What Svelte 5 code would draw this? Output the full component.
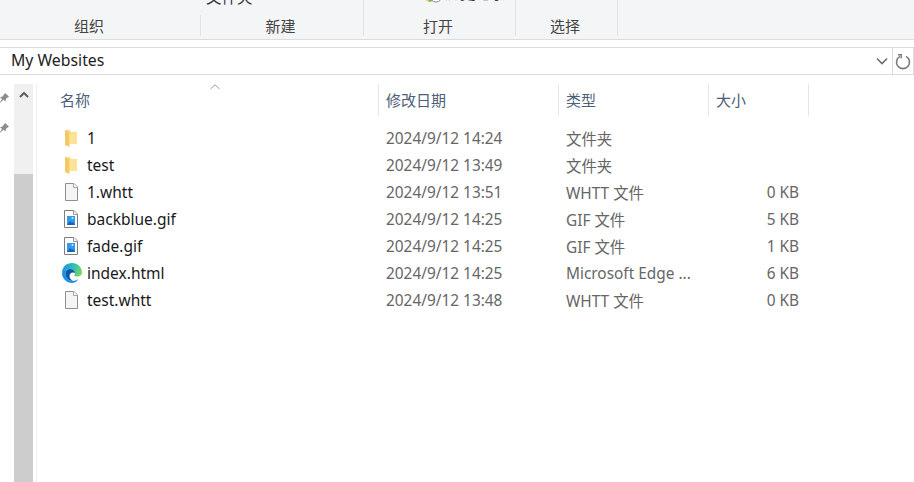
<script>
  const files = [
    { name: '1', date: '2024/9/12 14:24', type: '文件夹', size: '', icon: 'folder' },
    { name: 'test', date: '2024/9/12 13:49', type: '文件夹', size: '', icon: 'folder' },
    { name: '1.whtt', date: '2024/9/12 13:51', type: 'WHTT 文件', size: '0 KB', icon: 'doc' },
    { name: 'backblue.gif', date: '2024/9/12 14:25', type: 'GIF 文件', size: '5 KB', icon: 'gif' },
    { name: 'fade.gif', date: '2024/9/12 14:25', type: 'GIF 文件', size: '1 KB', icon: 'gif' },
    { name: 'index.html', date: '2024/9/12 14:25', type: 'Microsoft Edge ...', size: '6 KB', icon: 'edge' },
    { name: 'test.whtt', date: '2024/9/12 13:48', type: 'WHTT 文件', size: '0 KB', icon: 'doc' }
  ];
  const pins = [0, 1];
</script>

<div class="window">
  <div class="ribbon">
    <div class="group first"><span class="label">组织</span></div>
    <div class="group new">
      <span class="clipped">文件夹</span>
      <span class="label">新建</span>
    </div>
    <div class="group open">
      <span class="history">
        <svg width="18" height="12" viewBox="0 0 18 12">
          <path d="M0 2l4-2 3 2-3 2z" fill="#f3d27a" />
          <path d="M3 1l4-1 1 3-4 1z" fill="#6fb84a" />
          <circle cx="11" cy="-2" r="6" fill="#fff" stroke="#8a8a8a" />
        </svg>
        <span class="clipped">历史记录</span>
      </span>
      <span class="label">打开</span>
    </div>
    <div class="group select"><span class="label">选择</span></div>
  </div>

  <div class="address">
    <span class="path">My Websites</span>
    <svg class="chevron" width="12" height="8" viewBox="0 0 12 8">
      <path d="M1 1.500l5 5 5-5" fill="none" stroke="#6d6d6d" stroke-width="1.6" />
    </svg>
    <div class="refresh">
      <svg width="16" height="17" viewBox="0 0 16 17">
        <path d="M5 3.400A6.500 6.500 0 1 0 11 3.400" fill="none" stroke="#7a7a7a" stroke-width="1.600" />
        <path d="M3 1.800H6.200V5.500" fill="none" stroke="#7a7a7a" stroke-width="1.400" />
      </svg>
    </div>
  </div>

  <div class="main">
    <div class="nav">
      <div class="pins">
        {#each pins as pin}
          <svg width="10" height="12" viewBox="0 0 10 12">
            <path d="M0 11.500L3 7 .8 5.200 3.500 4.600 6 1l4 3.600-3 2.200-.6 2.800L4.500 7.800z" fill="#8c8c8c" />
          </svg>
        {/each}
      </div>
      <div class="scrollbar">
        <div class="arrow">
          <svg width="10" height="7" viewBox="0 0 10 7">
            <path d="M1 6l4-4 4 4" fill="none" stroke="#555" stroke-width="1.800" />
          </svg>
        </div>
        <div class="thumb"></div>
      </div>
    </div>

    <div class="list">
      <svg class="sort" width="10" height="6" viewBox="0 0 10 6">
        <path d="M.5 5L5 .8 9.500 5" fill="none" stroke="#9a9a9a" />
      </svg>
      <div class="head">
        <div class="col name">名称</div>
        <div class="col date">修改日期</div>
        <div class="col type">类型</div>
        <div class="col size">大小</div>
      </div>
      <div class="rows">
        {#each files as f}
          <div class="row">
            <div class="cell file">
              <span class="icon">
                {#if f.icon === 'folder'}
                  <svg width="18" height="18" viewBox="0 0 18 18">
                    <path d="M2 1h5l1 2h6v12H2z" fill="#fcdc85" />
                    <path d="M2 1l4.500 2.500V18L2 16z" fill="#f2c964" />
                    <path d="M6.500 3.500H14V15H6.500z" fill="#fde398" />
                  </svg>
                {:else if f.icon === 'doc'}
                  <svg width="18" height="18" viewBox="0 0 18 18">
                    <path d="M2.500.5h8.500l3.500 3.500v13.500h-12z" fill="#f4f5f6" stroke="#8f8f8f" />
                    <path d="M10.500.5v4h4" fill="#fff" stroke="#a5a5a5" />
                  </svg>
                {:else if f.icon === 'gif'}
                  <svg width="18" height="18" viewBox="0 0 18 18">
                    <path d="M1.500.5h9.500l3.500 3.500v13.500h-13z" fill="#fff" stroke="#7d7d7d" />
                    <path d="M10.500.5v4h4" fill="#f3f3f3" stroke="#9a9a9a" />
                    <rect x="4" y="6" width="8" height="9" fill="#2f9bea" />
                    <path d="M4 15l3-4 2 2 1-1 2 3z" fill="#1a5fc0" />
                    <circle cx="9.500" cy="8" r="1" fill="#cfeaff" />
                  </svg>
                {:else}
                  <svg class="edge" width="20" height="20" viewBox="0 0 20 20">
                    <defs>
                      <linearGradient id="edgeTop" x1="0" y1="0.300" x2="1" y2="0.500">
                        <stop offset="0" stop-color="#1b8fdf" />
                        <stop offset="0.55" stop-color="#2fbfb8" />
                        <stop offset="1" stop-color="#78d85c" />
                      </linearGradient>
                    </defs>
                    <path d="M0 10C0 4 4.500 0 10 0c5.500 0 10 4 10 9.500 0 2.500-2 4-4.500 4-1.500 0-3-.5-3.500-1 .5-.5 1-1 1-2C13 7.500 10 6 7.500 6 4 6 1 8 0 10z" fill="url(#edgeTop)" />
                    <path d="M0 10c1.500-3 4-4 7-4-3 1-4 3.500-3.500 6 .5 3 3.500 6 7 6 2.500 0 4.500-.8 6-2-1.500 2.500-4 4-6.500 4C4.500 20 0 15.500 0 10z" fill="#1b8fe2" />
                    <path d="M7.500 6c-3 .5-4.500 3.500-4 6 .5 3 3.500 6 7.500 6-2-1-3.500-3-3.500-5 0-3 3-4.500 5.500-3C13 7.500 10 6 7.500 6z" fill="#0b58ab" />
                  </svg>
                {/if}
              </span>
              <span>{f.name}</span>
            </div>
            <div class="cell">{f.date}</div>
            <div class="cell">{f.type}</div>
            <div class="cell right">{f.size}</div>
          </div>
        {/each}
      </div>
    </div>
  </div>
</div>

<style>
  :global(body) {
    margin: 0;
    background: #fff;
    overflow: hidden;
  }
  .window {
    width: 914px;
    height: 482px;
    overflow: hidden;
    display: flex;
    flex-direction: column;
    font-family: "Noto Sans", "Noto Sans CJK SC", sans-serif;
    font-size: 15px;
    color: #1a1a1a;
    background: #fff;
  }

  /* ribbon, the button rows are cut off by the top of the shot */
  .ribbon {
    flex: none;
    display: flex;
    background: #f4f5f7;
    border-bottom: 1px solid #dcdcdc;
    padding-bottom: 3px;
    height: 36px;
    overflow: hidden;
    margin-left: -22px;
    width: 936px;
  }
  .group {
    box-sizing: border-box;
    height: 100%;
    border-right: 1px solid #e2e3e5;
    display: flex;
    flex-direction: column;
    align-items: center;
    justify-content: flex-end;
    position: relative;
  }
  .first { width: 223px; height: 21px; align-self: flex-end; }
  .new { width: 163px; padding-right: 3px; }
  .open { width: 152px; padding-right: 3px; }
  .select { width: 102px; padding-right: 3px; }
  .label {
    font-size: 15px;
    line-height: 20px;
    color: #444;
  }
  .clipped {
    position: absolute;
    top: -13px;
    font-size: 15.500px;
    line-height: 20px;
    white-space: nowrap;
    color: #333;
  }
  .new .clipped { left: 5px; }
  .history {
    position: absolute;
    top: -2px;
    left: 61px;
    display: flex;
  }
  .history .clipped { left: 20px; top: -15px; letter-spacing: -.5px; }

  .address {
    margin-top: 7px;
    height: 26px;
    flex: none;
    display: flex;
    align-items: center;
    border-top: 1px solid #dcdcdc;
    border-bottom: 1px solid #dcdcdc;
  }
  .path {
    flex: 1;
    padding-left: 11px;
    padding-bottom: 2px;
    font-size: 15.800px;
    color: #222;
  }
  .chevron { margin-right: 4px; }
  .refresh {
    width: 22px;
    height: 100%;
    border-left: 1px solid #dcdcdc;
    border-right: 1px solid #dcdcdc;
    box-sizing: border-box;
    display: flex;
    align-items: center;
    justify-content: center;
  }

  .main {
    flex: 1;
    display: flex;
    min-height: 0;
    padding-top: 9px;
  }
  .nav {
    width: 37px;
    flex: none;
    box-sizing: border-box;
    border-right: 1px solid #f0f0f0;
    display: flex;
    padding-right: 3px;
  }
  .pins {
    width: 14px;
    flex: none;
    display: flex;
    flex-direction: column;
    gap: 18px;
    padding-top: 8px;
  }
  .pins svg { margin-left: -1px; }
  .scrollbar {
    width: 20px;
    background: #f0f0f0;
    display: flex;
    flex-direction: column;
  }
  .arrow {
    height: 90px;
    flex: none;
    display: flex;
    justify-content: center;
    padding-top: 7px;
    box-sizing: border-box;
  }
  .thumb {
    flex: 1;
    background: #cdcdcd;
  }

  .list {
    flex: 1;
    position: relative;
  }
  .sort {
    position: absolute;
    left: 173px;
    top: 0;
  }
  .head {
    display: flex;
    height: 32px;
    color: #4c607a;
    font-size: 15px;
  }
  .col {
    box-sizing: border-box;
    border-right: 1px solid #e5e5e5;
    display: flex;
    align-items: center;
    padding: 0 0 1px 7px;
  }
  .col.name { width: 342px; padding-left: 23px; }
  .col.date { width: 180px; }
  .col.type { width: 150px; }
  .col.size { width: 100px; }

  .rows {
    padding-top: 8px;
  }
  .row {
    display: flex;
    height: 27px;
    align-items: center;
    color: #666;
    font-size: 15.400px;
  }
  .cell {
    box-sizing: border-box;
    width: 180px;
    padding: 1px 0 0 7px;
    white-space: nowrap;
  }
  .cell:nth-child(3) { width: 150px; }
  .cell.right {
    width: 100px;
    padding: 1px 10px 0 0;
    text-align: right;
  }
  .cell.file {
    width: 342px;
    padding: 0 0 0 23px;
    display: flex;
    align-items: center;
    color: #1a1a1a;
    font-size: 15.500px;
  }
  .icon {
    width: 27px;
    flex: none;
    display: flex;
    align-items: center;
  }
  .icon svg { margin-left: 3px; }
  .icon svg.edge { margin-left: 2px; }
</style>
